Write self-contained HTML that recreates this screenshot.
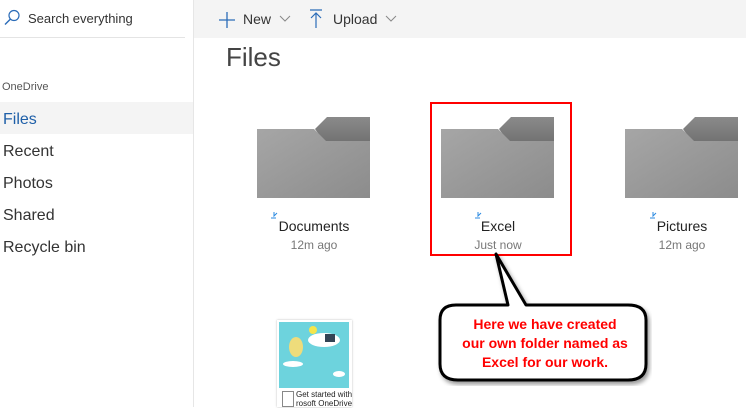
<!DOCTYPE html>
<html><head><style>
body{margin:0;width:746px;height:407px;overflow:hidden;background:#fff;font-family:"Liberation Sans",sans-serif;position:relative}
.a{position:absolute}
.nav{left:3px;font-size:16px;color:#333}
.name{font-size:14px;color:#222;text-align:center;width:140px}
.sub{font-size:12px;color:#777;text-align:center;width:140px}
</style></head><body>
<div class="a" style="left:193px;top:0;width:1px;height:407px;background:#e6e6e6"></div>
<div class="a" style="left:194px;top:0;width:552px;height:38px;background:#f4f4f4"></div>
<svg class="a" style="left:3px;top:9px" width="18" height="18"><circle cx="11" cy="6.5" r="5" fill="none" stroke="#2b6cb8" stroke-width="1.2"/><line x1="7.5" y1="10" x2="2" y2="15.5" stroke="#2b6cb8" stroke-width="1.4"/></svg>
<div class="a" style="left:28px;top:11px;font-size:13px;color:#333">Search everything</div>
<div class="a" style="left:0;top:37px;width:185px;height:1px;background:#e4e4e4"></div>
<svg class="a" style="left:218px;top:11px" width="18" height="18"><path d="M9 1V17M1 9H17" stroke="#2b6cb8" stroke-width="1.3"/></svg>
<div class="a" style="left:243px;top:11px;font-size:14px;color:#333">New</div>
<svg class="a" style="left:279px;top:15px" width="12" height="8"><path d="M1 1L6 6L11 1" fill="none" stroke="#888"/></svg>
<svg class="a" style="left:309px;top:9px" width="14" height="20"><path d="M1 1H13M7 4V19M2 9L7 4L12 9" fill="none" stroke="#2b6cb8" stroke-width="1.2"/></svg>
<div class="a" style="left:333px;top:11px;font-size:14px;color:#333">Upload</div>
<svg class="a" style="left:385px;top:15px" width="12" height="8"><path d="M1 1L6 6L11 1" fill="none" stroke="#888"/></svg>
<div class="a" style="left:226px;top:42px;font-size:26px;color:#444">Files</div>
<div class="a" style="left:2px;top:81px;font-size:11px;color:#555">OneDrive</div>
<div class="a" style="left:0;top:102px;width:193px;height:32px;background:#f4f4f4"></div>
<div class="a nav" style="top:111px;color:#1e5fa8">Files</div>
<div class="a nav" style="top:143px">Recent</div>
<div class="a nav" style="top:175px">Photos</div>
<div class="a nav" style="top:207px">Shared</div>
<div class="a nav" style="top:239px">Recycle bin</div>

<svg width="0" height="0" style="position:absolute"><defs><linearGradient id="g" x1="0" y1="0" x2="1" y2="1"><stop offset="0" stop-color="#a6a6a6"/><stop offset="1" stop-color="#8c8c8c"/></linearGradient><linearGradient id="t" x1="0" y1="0" x2="0" y2="1"><stop offset="0" stop-color="#8a8a8a"/><stop offset="1" stop-color="#6e6e6e"/></linearGradient></defs></svg>
<svg class="a" style="left:257px;top:116px" width="114" height="83"><path d="M58 13L70 1H113V30H70Z" fill="url(#t)"/><path d="M0 13H57L69 25H113V82H0Z" fill="url(#g)"/></svg>
<svg class="a" style="left:441px;top:116px" width="114" height="83"><path d="M58 13L70 1H113V30H70Z" fill="url(#t)"/><path d="M0 13H57L69 25H113V82H0Z" fill="url(#g)"/></svg>
<svg class="a" style="left:625px;top:116px" width="114" height="83"><path d="M58 13L70 1H113V30H70Z" fill="url(#t)"/><path d="M0 13H57L69 25H113V82H0Z" fill="url(#g)"/></svg>

<div class="a name" style="left:244px;top:218px">Documents</div>
<div class="a sub" style="left:244px;top:238px">12m ago</div>
<div class="a name" style="left:428px;top:218px">Excel</div>
<div class="a sub" style="left:428px;top:238px">Just now</div>
<div class="a name" style="left:612px;top:218px">Pictures</div>
<div class="a sub" style="left:612px;top:238px">12m ago</div>
<svg class="a" style="left:271px;top:212px" width="8" height="8"><path d="M0 6H5M3 0V4L6 1" fill="none" stroke="#2b8ae0"/></svg>
<svg class="a" style="left:475px;top:212px" width="8" height="8"><path d="M0 6H5M3 0V4L6 1" fill="none" stroke="#2b8ae0"/></svg>
<svg class="a" style="left:650px;top:212px" width="8" height="8"><path d="M0 6H5M3 0V4L6 1" fill="none" stroke="#2b8ae0"/></svg>

<div class="a" style="left:430px;top:102px;width:138px;height:150px;border:2px solid #f00"></div>

<svg class="a" style="left:436px;top:250px" width="216" height="136">
<path d="M60 4L72 55H20Q4 55 4 70V114Q4 130 22 130H192Q210 130 210 114V70Q210 55 192 55H90Z" fill="#fff" stroke="#000" stroke-width="3" stroke-linejoin="round" style="filter:drop-shadow(2px 3px 2px rgba(0,0,0,.4))"/>
</svg>
<div class="a" style="left:436px;top:315px;width:218px;text-align:center;color:#f00;font-weight:bold;font-size:14px;line-height:19px">Here we have created<br>our own folder named as<br>Excel for our work.</div>

<div class="a" style="left:277px;top:320px;width:75px;height:87px;background:#fff;box-shadow:0 0 2px #bbb"></div>
<svg class="a" style="left:279px;top:322px" width="70" height="66"><rect width="70" height="66" fill="#6dd3dd"/><circle cx="34" cy="8" r="4" fill="#f4e54c"/><ellipse cx="45" cy="18" rx="16" ry="7" fill="#fff"/><rect x="46" y="12" width="10" height="8" fill="#345"/><ellipse cx="17" cy="25" rx="7" ry="10" fill="#eedc7b"/><ellipse cx="14" cy="42" rx="10" ry="3" fill="#fff"/><ellipse cx="60" cy="52" rx="6" ry="3" fill="#fff"/></svg>
<div class="a" style="left:296px;top:390px;font-size:8px;line-height:9px;color:#222">Get started with<br>rosoft OneDrive</div>
<div class="a" style="left:282px;top:391px;width:10px;height:14px;border:1px solid #888"></div>
</body></html>
